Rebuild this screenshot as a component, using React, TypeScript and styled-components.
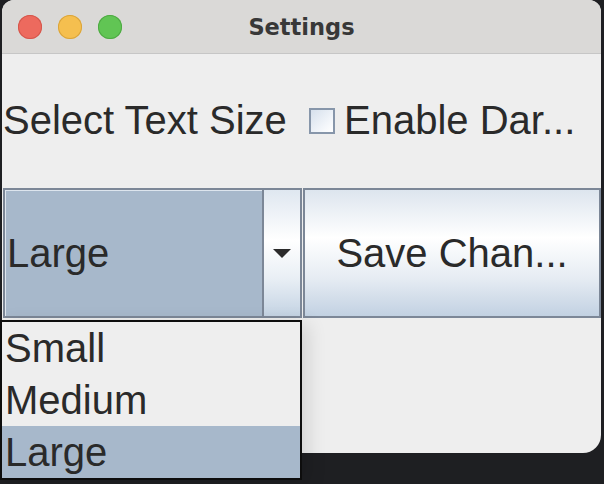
import React from "react";
import styled, { createGlobalStyle } from "styled-components";

const GlobalStyle = createGlobalStyle`
  html, body {
    margin: 0;
    padding: 0;
    background: #1e1f22;
    width: 604px;
    height: 484px;
    overflow: hidden;
  }
  * { box-sizing: border-box; }
`;

const Desktop = styled.div`
  width: 604px;
  height: 484px;
  padding-left: 2px;
  background: #1e1f22;
  font-family: "Liberation Sans", Arial, sans-serif;
  color: #2a2a2a;
`;

const Window = styled.div`
  position: relative;
  width: 599px;
  height: 453px;
  background: #eeeeee;
  border-radius: 12px 12px 18px 18px;
`;

const TitleBar = styled.div`
  height: 54px;
  display: grid;
  grid-template-columns: 1fr auto 1fr;
  align-items: center;
  background: #dad9d7;
  border-bottom: 1px solid #c6c6c6;
  border-radius: 12px 12px 0 0;
`;

const Lights = styled.div`
  display: flex;
  gap: 16px;
  padding-left: 16px;
`;

const Light = styled.span<{ $fill: string; $edge: string }>`
  width: 24px;
  height: 24px;
  border-radius: 50%;
  background: ${(p) => p.$fill};
  box-shadow: inset 0 0 0 1px ${(p) => p.$edge};
`;

const Title = styled.div`
  font-family: "DejaVu Sans", sans-serif;
  font-weight: bold;
  font-size: 22.5px;
  color: #383838;
  padding-top: 1px;
`;

const Content = styled.div`
  display: grid;
  grid-template-columns: 300px 299px;
  grid-template-rows: repeat(3, 133px);
`;

const Cell = styled.div<{ $pad?: number }>`
  display: flex;
  align-items: center;
  padding-left: ${(p) => p.$pad ?? 0}px;
  font-size: 40px;
  white-space: nowrap;
`;

const ControlCell = styled.div<{ $left: number; $right: number }>`
  display: flex;
  padding: 1px ${(p) => p.$right}px 2px ${(p) => p.$left}px;
`;

const CheckRow = styled.label`
  display: flex;
  align-items: center;
  gap: 9px;
`;

const CheckBox = styled.span`
  width: 26px;
  height: 26px;
  border: 2px solid #8796aa;
  background: linear-gradient(135deg, #d6e0ec, #f4f7fb 70%, #ffffff);
`;

const Combo = styled.div`
  flex: 1;
  display: flex;
  border: 2px solid #7c8797;
  background: #a7b8cb;
`;

const ComboValue = styled.div`
  flex: 1;
  display: flex;
  align-items: center;
  padding-left: 2px;
  font-size: 40px;
  box-shadow: inset 1px 1px 0 #dde5ee;
`;

const ArrowButton = styled.div`
  width: 38px;
  display: flex;
  align-items: center;
  justify-content: center;
  border-left: 2px solid #7c8797;
  background: linear-gradient(#dfe7f0 0%, #ffffff 40%, #e9eff5 70%, #c4d3e3 100%);
`;

const Button = styled.div`
  flex: 1;
  display: flex;
  align-items: center;
  justify-content: center;
  border: 2px solid #7c8797;
  font-size: 40px;
  background: linear-gradient(#dde5ee 0%, #ffffff 38%, #e6ecf3 70%, #c2d1e2 100%);
`;

const Popup = styled.div`
  position: absolute;
  left: -2px;
  top: 320px;
  width: 302px;
  height: 160px;
  border: 2px solid #0d0d0d;
  background: #eeeeee;
  box-shadow: 6px 4px 18px rgba(0, 0, 0, 0.12);
  z-index: 2;
`;

const Item = styled.div<{ $selected?: boolean }>`
  height: 52px;
  line-height: 52px;
  padding-left: 3px;
  font-size: 40px;
  background: ${(p) => (p.$selected ? "#a7b8cb" : "transparent")};
`;

export default function App() {
  const options = ["Small", "Medium", "Large"];
  const selected = "Large";
  return (
    <>
      <GlobalStyle />
      <Desktop>
        <Window>
          <TitleBar>
            <Lights>
              <Light $fill="#ed6a5e" $edge="#d4574c" />
              <Light $fill="#f5bf4f" $edge="#d9a43b" />
              <Light $fill="#61c554" $edge="#4ea943" />
            </Lights>
            <Title>Settings</Title>
            <div />
          </TitleBar>
          <Content>
            <Cell $pad={1}>Select Text Size</Cell>
            <Cell $pad={7}>
              <CheckRow>
                <CheckBox />
                <span>Enable Dar...</span>
              </CheckRow>
            </Cell>
            <ControlCell $left={1} $right={0}>
              <Combo>
                <ComboValue>{selected}</ComboValue>
                <ArrowButton>
                  <svg width="18" height="9" viewBox="0 0 18 9">
                    <path d="M0 0 H18 L9 9 Z" fill="#2b2b2b" />
                  </svg>
                </ArrowButton>
              </Combo>
            </ControlCell>
            <ControlCell $left={1} $right={0}>
              <Button>Save Chan...</Button>
            </ControlCell>
            <div />
            <div />
          </Content>
          <Popup>
            {options.map((o) => (
              <Item key={o} $selected={o === selected}>
                {o}
              </Item>
            ))}
          </Popup>
        </Window>
      </Desktop>
    </>
  );
}
